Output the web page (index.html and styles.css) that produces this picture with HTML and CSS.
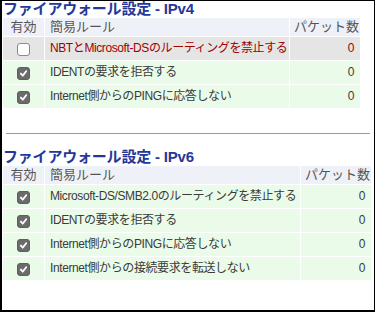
FILE: index.html
```html
<!doctype html>
<html>
<head>
<meta charset="utf-8">
<title>ファイアウォール設定</title>
  <link rel="stylesheet" href="styles.css">
</head>
<body>
  <div class="frame">
    <h2 class="ttl">ファイアウォール設定 - IPv4</h2>
    <table class="fw fw4">
      <tr>
        <th class="on">有効</th>
        <th class="rule">簡易ルール</th>
        <th class="cnt">パケット数</th>
      </tr>
      <tr class="off">
        <td class="on"><span class="chk"></span></td>
        <td class="rule">NBTとMicrosoft-DSのルーティングを禁止する</td>
        <td class="cnt">0</td>
      </tr>
      <tr>
        <td class="on"><span class="chk checked"><svg viewBox="0 0 13 13"><path d="M3.4 6.6 L5.6 9 L9.7 3.8" /></svg></span></td>
        <td class="rule">IDENTの要求を拒否する</td>
        <td class="cnt">0</td>
      </tr>
      <tr>
        <td class="on"><span class="chk checked"><svg viewBox="0 0 13 13"><path d="M3.4 6.6 L5.6 9 L9.7 3.8" /></svg></span></td>
        <td class="rule">Internet側からのPINGに応答しない</td>
        <td class="cnt">0</td>
      </tr>
    </table>

    <hr class="sep">

    <h2 class="ttl">ファイアウォール設定 - IPv6</h2>
    <table class="fw fw6">
      <tr>
        <th class="on">有効</th>
        <th class="rule">簡易ルール</th>
        <th class="cnt">パケット数</th>
      </tr>
      <tr>
        <td class="on"><span class="chk checked"><svg viewBox="0 0 13 13"><path d="M3.4 6.6 L5.6 9 L9.7 3.8" /></svg></span></td>
        <td class="rule">Microsoft-DS/SMB2.0のルーティングを禁止する</td>
        <td class="cnt">0</td>
      </tr>
      <tr>
        <td class="on"><span class="chk checked"><svg viewBox="0 0 13 13"><path d="M3.4 6.6 L5.6 9 L9.7 3.8" /></svg></span></td>
        <td class="rule">IDENTの要求を拒否する</td>
        <td class="cnt">0</td>
      </tr>
      <tr>
        <td class="on"><span class="chk checked"><svg viewBox="0 0 13 13"><path d="M3.4 6.6 L5.6 9 L9.7 3.8" /></svg></span></td>
        <td class="rule">Internet側からのPINGに応答しない</td>
        <td class="cnt">0</td>
      </tr>
      <tr>
        <td class="on"><span class="chk checked"><svg viewBox="0 0 13 13"><path d="M3.4 6.6 L5.6 9 L9.7 3.8" /></svg></span></td>
        <td class="rule">Internet側からの接続要求を転送しない</td>
        <td class="cnt">0</td>
      </tr>
    </table>
  </div>
</body>
</html>
```

FILE: styles.css
```css
body {
  margin: 0;
  padding: 0;
  background: #fff;
  font-family: "Liberation Sans", "Noto Sans CJK JP", sans-serif;
}

.frame {
  box-sizing: border-box;
  height: 312px;
  border-top: 1px solid #000;
  border-right: 1px solid #000;
  border-left: 2px solid #000;
  border-bottom: 2px solid #000;
}

.ttl {
  height: 16px;
  margin: 0;
  padding-left: 1px;
  font-size: 15px;
  line-height: 16px;
  letter-spacing: -0.2px;
  font-weight: bold;
  color: #24389a;
  white-space: nowrap;
}

.fw {
  border-collapse: separate;
  border-spacing: 1px;
  table-layout: fixed;
}
.fw4 {
  width: 359px;
}
.fw6 {
  width: 370px;
}

.fw th {
  height: 18px;
  padding: 0 5px;
  font-size: 13px;
  line-height: 18px;
  font-weight: normal;
  color: #555;
  background: #eff1f8;
  text-align: left;
  white-space: nowrap;
}
.fw td {
  height: 23px;
  padding: 0 5px;
  font-size: 12px;
  line-height: 23px;
  letter-spacing: -0.4px;
  color: #3a3a3a;
  background: #ebfbe9;
  white-space: nowrap;
}

.fw .on {
  width: 41px;
  padding: 0;
  text-align: center;
}
.fw .cnt {
  width: 60px;
  padding: 0 6px 0 4px;
  text-align: right;
}

.fw tr.off td {
  background: #e5e5e5;
  color: #a00000;
}

.chk {
  display: inline-block;
  box-sizing: border-box;
  width: 13px;
  height: 13px;
  margin-top: 1px;
  border: 1px solid #8a8a8a;
  border-radius: 3px;
  background: #fff;
  vertical-align: middle;
}
.chk.checked {
  border-color: #5e5e5e;
  background: #6b6b6b;
}
.chk svg {
  display: block;
  width: 11px;
  height: 11px;
}
.chk path {
  fill: none;
  stroke: #fff;
  stroke-width: 2.2;
  stroke-linecap: round;
  stroke-linejoin: round;
}

.sep {
  height: 0;
  margin: 24px 4px 15px 4px;
  border: 0;
  border-top: 1px solid #9a9a9a;
}
```
